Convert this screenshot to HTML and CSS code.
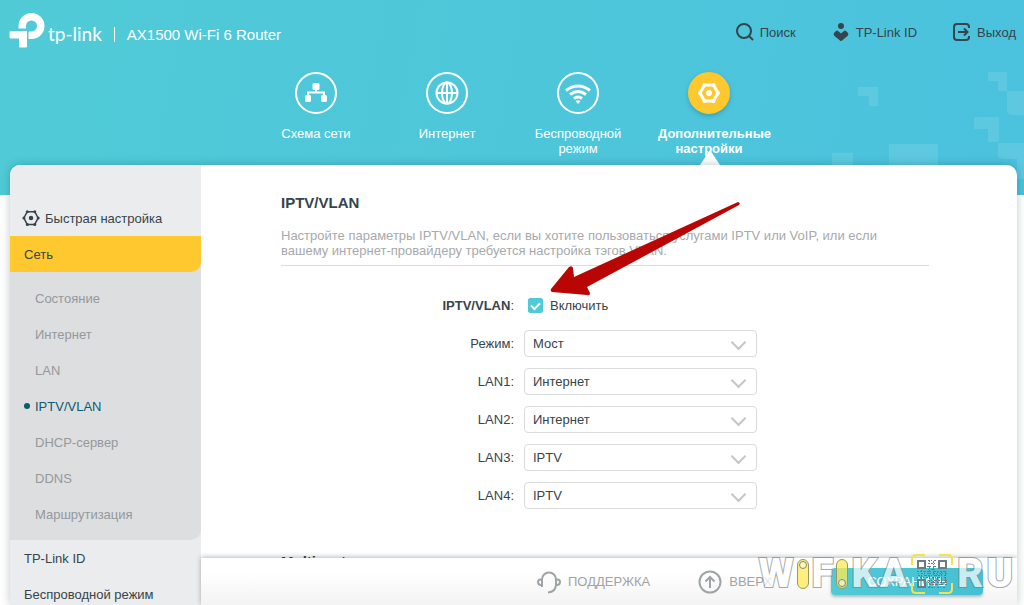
FILE: index.html
```html
<!DOCTYPE html>
<html lang="ru">
<head>
  <meta charset="UTF-8">
  <meta name="viewport" content="width=device-width, initial-scale=1.0">
  <title>AX1500 Wi-Fi 6 Router</title>
  <link rel="stylesheet" href="styles.css">
</head>
<body>
  <svg class="pixels" viewBox="0 0 192 130" aria-hidden="true">
    <path d="M26 22h20v19h-9V31H26z M156 7h19v19h-9V16h-10z M175 26h17v24h-12q-5 0-5-5z M142 52h25v25h-11V64h-14z M166 78h26v36h-7V94h-14q-5 0-5-5z M57 79h49v21H57z M0 88h21v12H0z"/>
  </svg>

  <header class="topbar">
    <a class="logo" href="#">
      <svg viewBox="0 0 36 36" width="36" height="36" aria-hidden="true">
        <path d="M8.500 15.500V13a13 13 0 1 1 13 13h-3v-6.500a1 1 0 0 1 1-1h2a5.500 5.500 0 1 0-5.500-5.500v2.500z M1 18h16v15.500a1 1 0 0 1-1 1H10a1 1 0 0 1-1-1V25.500H1a1.500 1.500 0 0 1-1.500-1.500v-4.500A1.500 1.500 0 0 1 1 18z"/>
      </svg>
      <span class="logo-text">tp-link</span>
    </a>
    <span class="model">AX1500 Wi-Fi 6 Router</span>
    <nav class="tools">
      <a href="#">
        <svg viewBox="0 0 20 20" width="20" height="20"><circle cx="9" cy="9" r="7"/><path d="M14 14l4 4"/></svg>
        Поиск
      </a>
      <a href="#">
        <svg class="solid" viewBox="0 0 20 20" width="20" height="20"><circle cx="10" cy="4" r="3"/><path d="M3 11l2-2q1-1 2 0l3 2.500L13 9q1-1 2 0l2 2q1 1.500-.5 3L11 18.500q-1 1-2 0L3.500 14Q2 12.500 3 11z"/></svg>
        TP-Link ID
      </a>
      <a href="#">
        <svg viewBox="0 0 20 20" width="20" height="20"><path d="M17 6V5q0-3-3-3H5Q2 2 2 5v10q0 3 3 3h9q3 0 3-3v-1M6 10h9M12 6.500l3.500 3.500-3.500 3.500"/></svg>
        Выход
      </a>
    </nav>
  </header>

  <nav class="tabs">
    <a href="#" class="tab">
      <span class="tab-icon">
        <svg viewBox="0 0 24 24" width="24" height="24"><path class="fill" d="M10 2h4q1.500 0 1.500 1.500v4Q15.500 9 14 9h-4Q8.500 9 8.500 7.500v-4Q8.500 2 10 2zM2.500 14h3Q7 14 7 15.500v4Q7 21 5.500 21h-3Q1 21 1 19.500v-4Q1 14 2.500 14zM18.500 14h3q1.500 0 1.500 1.500v4q0 1.500-1.500 1.500h-3q-1.500 0-1.500-1.500v-4q0-1.500 1.500-1.500z"/><path d="M12 8v4M4 15v-3.500h16V15"/></svg>
      </span>
      <span class="tab-label">Схема сети</span>
    </a>
    <a href="#" class="tab">
      <span class="tab-icon">
        <svg viewBox="0 0 24 24" width="24" height="24"><circle cx="12" cy="12" r="10.500"/><ellipse cx="12" cy="12" rx="5" ry="10.500"/><path d="M12 1.500v21M2 12h20"/></svg>
      </span>
      <span class="tab-label">Интернет</span>
    </a>
    <a href="#" class="tab">
      <span class="tab-icon">
        <svg class="wifi" viewBox="0 0 26 26" width="26" height="26"><path d="M1 10.500q12-9 24 0M5 14.500q8-6 16 0M9 18.500q4-3 8 0"/><path class="fill" d="M10.500 21q2.500-1.500 5 0L13 24z"/></svg>
      </span>
      <span class="tab-label">Беспроводной режим</span>
    </a>
    <a href="#" class="tab active">
      <span class="tab-icon">
        <svg class="gear" viewBox="0 0 24 24" width="24" height="24"><path d="M7.500 4h9L21 12l-4.500 8h-9L3 12z"/><circle class="fill" cx="12" cy="12" r="3"/><path class="knobs" d="M7.500 4h.1M16.500 4h.1M3 12h.1M21 12h.1M7.500 20h.1M16.500 20h.1"/></svg>
      </span>
      <span class="tab-label">Дополнительные настройки</span>
    </a>
  </nav>

  <div class="card">
    <nav class="sidebar">
      <a href="#" class="item quick">
        <svg class="gear" viewBox="0 0 24 24" width="18" height="18"><path d="M7 3.500h10L21.500 12 17 20.500H7L2.500 12z"/><circle class="fill" cx="12" cy="12" r="3"/><path class="knobs" d="M7 3.500h.1M17 3.500h.1M2.500 12h.1M21.500 12h.1M7 20.500h.1M17 20.500h.1"/></svg>
        Быстрая настройка
      </a>
      <div class="group">
        <a href="#" class="item current">Сеть</a>
        <ul class="submenu">
          <li><a href="#">Состояние</a></li>
          <li><a href="#">Интернет</a></li>
          <li><a href="#">LAN</a></li>
          <li><a href="#" class="selected">IPTV/VLAN</a></li>
          <li><a href="#">DHCP-сервер</a></li>
          <li><a href="#">DDNS</a></li>
          <li><a href="#">Маршрутизация</a></li>
        </ul>
      </div>
      <a href="#" class="item">TP-Link ID</a>
      <a href="#" class="item">Беспроводной режим</a>
    </nav>

    <div class="main">
      <main class="content">
        <h1>IPTV/VLAN</h1>
        <p class="intro">Настройте параметры IPTV/VLAN, если вы хотите пользоваться услугами IPTV или VoIP, или если вашему интернет-провайдеру требуется настройка тэгов VLAN.</p>

        <form id="iptv" class="settings">
          <label class="name" for="enable"><b>IPTV/VLAN</b>:</label>
          <div class="check">
            <input type="checkbox" id="enable" checked>
            <label for="enable">Включить</label>
          </div>

          <label class="name" for="mode">Режим:</label>
          <div class="select">
            <select id="mode"><option>Мост</option></select>
          </div>

          <label class="name" for="lan1">LAN1:</label>
          <div class="select">
            <select id="lan1"><option>Интернет</option><option>IPTV</option></select>
          </div>

          <label class="name" for="lan2">LAN2:</label>
          <div class="select">
            <select id="lan2"><option>Интернет</option><option>IPTV</option></select>
          </div>

          <label class="name" for="lan3">LAN3:</label>
          <div class="select">
            <select id="lan3"><option>IPTV</option><option>Интернет</option></select>
          </div>

          <label class="name" for="lan4">LAN4:</label>
          <div class="select">
            <select id="lan4"><option>IPTV</option><option>Интернет</option></select>
          </div>
        </form>

        <h2>Multicast</h2>
      </main>

      <footer class="footer">
        <a href="#">
          <svg viewBox="0 0 24 24" width="24" height="24"><path d="M5 17V9.500a7 7 0 0 1 14 0V14q0 8-8 8.500M5 9.500H3.500Q1 9.500 1 12t2.500 3H5M19 9.500h1.500q2.500 0 2.500 2.500t-2.500 3H19"/></svg>
          ПОДДЕРЖКА
        </a>
        <a href="#">
          <svg viewBox="0 0 24 24" width="24" height="24"><circle cx="12" cy="12" r="10.500"/><path d="M12 18V7M7.500 11.500L12 7l4.500 4.500"/></svg>
          ВВЕРХ
        </a>
        <button type="submit" form="iptv">СОХРАНИТЬ</button>
      </footer>
    </div>
  </div>

  <svg class="arrow" viewBox="0 0 192 96" aria-hidden="true">
    <path d="M189 1q3 1 1 3L38 86l3 6q0 3-3 2L3 91q-2-1-1-3L20 66q3-2 4 1l1 9z"/>
  </svg>

  <div class="watermark" aria-hidden="true">
    <span>W</span>
    <svg viewBox="0 0 12 30" width="12" height="30"><rect class="pill" x=".5" y=".5" width="11" height="29" rx="5.500"/><circle class="knob" cx="6" cy="6" r="3.500"/></svg>
    <span>F</span>
    <svg viewBox="0 0 12 30" width="12" height="30"><rect class="pill" x=".5" y=".5" width="11" height="29" rx="5.500"/><circle class="knob" cx="6" cy="24" r="3.500"/></svg>
    <span>K</span>
    <span>A</span>
    <svg class="qr" viewBox="0 0 44 42" width="44" height="42">
      <path class="frame" d="M2 12V6q0-4 4-4h9M29 2h9q4 0 4 4v6M2 30v6q0 4 4 4h9M29 40h9q4 0 4-4v-6"/>
      <path class="finder" d="M8 8h7v7H8zM29 8h7v7h-7zM8 27h7v7H8z"/>
      <path class="dots a" d="M18 7.500h8M17 13.500h9M7 18.500h30M8 22.500h28M18 27.500h19M19 31.500h18"/>
      <path class="dots b" d="M18 10.500h8M18 16.500h8M8 20.500h29M7 24.500h30M18 29.500h19M18 34.500h18"/>
      <path class="dots a" d="M19.500 7v28M23.500 8v26M27.500 18v16M31.500 18v16M35.500 18v16M11.500 17v9"/>
    </svg>
    <span>R</span>
    <span>U</span>
  </div>
</body>
</html>
```
FILE: styles.css
```css
* { box-sizing: border-box; }
body {
  margin: 0;
  height: 100vh;
  overflow: hidden;
  display: flex;
  flex-direction: column;
  position: relative;
  font-family: "Liberation Sans", Arial, sans-serif;
  font-size: 13px;
  line-height: 15px;
  color: #36444b;
  background: linear-gradient(100deg, #50cbd6, #4bc2de) top / 100% 195px no-repeat #fff;
}
a { color: inherit; text-decoration: none; }
svg { flex: none; fill: none; stroke: currentColor; stroke-width: 2; }
.fill { fill: currentColor; stroke: none; }
.knobs { stroke-width: 4; stroke-linecap: round; }

.pixels {
  position: absolute;
  right: 0;
  top: 65px;
  width: 192px;
  height: 130px;
  fill: #fff;
  fill-opacity: 0.1;
  stroke: none;
}

/* header */
.topbar {
  display: flex;
  align-items: center;
  height: 64px;
  padding: 4px 8px 0 10px;
  position: relative;
}
.logo { display: flex; align-items: center; gap: 2px; color: #fff; }
.logo svg { fill: #fff; stroke: none; margin-bottom: 6px; overflow: visible; }
.logo-text { font-family: Lato, sans-serif; font-size: 19px; line-height: 24px; }
.model {
  margin-left: 12px;
  padding-left: 12px;
  border-left: 1px solid #fff;
  color: #fff;
  font-size: 15px;
  line-height: 15px;
}
.tools { display: flex; gap: 35px; margin: 0 0 4px auto; }
.tools a { display: flex; align-items: center; gap: 5px; }
.tools .solid { fill: currentColor; stroke: none; }

.tabs { display: flex; justify-content: center; padding: 8px 0 0 1px; height: 101px; position: relative; }
.tab {
  width: 131px;
  display: flex;
  flex-direction: column;
  align-items: center;
  gap: 12px;
  text-align: center;
  color: #fff;
  position: relative;
}
.tab-label { width: 102px; }
.tab-icon {
  display: flex;
  flex: none;
  align-items: center;
  justify-content: center;
  width: 42px;
  height: 42px;
  border: 2px solid #fff;
  border-radius: 50%;
}
.tab .wifi { stroke-width: 3; }
.tab .gear { stroke-width: 3; }
.tab.active { font-weight: bold; }
.active .tab-icon { background: #ffc82e; border-color: #ffc82e; box-shadow: 0 2px 4px rgba(0, 60, 80, 0.25); }
.tab.active::after {
  content: "";
  position: absolute;
  bottom: 0;
  left: 50%;
  margin-left: -9px;
  border: 10px solid transparent;
  border-top: 0;
  border-bottom: 15px solid #fff;
}

/* card */
.card {
  flex: 1;
  min-height: 0;
  display: flex;
  margin: 0 7px 0 10px;
  border-radius: 10px 10px 0 0;
  overflow: hidden;
  position: relative;
  background: #fff;
  box-shadow: 0 0 10px rgba(0, 40, 50, 0.25);
}
.sidebar { width: 191px; flex: none; padding-top: 35px; background: #ebeced; overflow: hidden; }
.item { display: flex; align-items: center; height: 36px; padding-left: 14px; }
.quick { gap: 5px; padding-left: 12px; }
.group { background: #dddee0; border-radius: 0 0 10px 0; }
.current { background: #ffc82e; border-radius: 0 0 10px 0; }
.submenu { list-style: none; margin: 0; padding: 8px 0; }
.submenu a { display: flex; align-items: center; height: 36px; padding-left: 25px; color: #94999c; }
.submenu .selected { color: #0c5c6b; padding-left: 14px; }
.selected::before { content: ""; width: 6px; height: 6px; margin-right: 5px; border-radius: 50%; background: currentColor; }

.main { flex: 1; min-width: 0; display: flex; flex-direction: column; }
.content { flex: 1; min-height: 0; overflow: hidden; padding: 29px 88px 0 80px; }
h1, h2 { margin: 0; font-size: 15px; line-height: 17px; font-weight: bold; }
.intro { margin: 17px 0 0; padding: 0 24px 7px 0; border-bottom: 1px solid #dcdcdc; color: #a7aaac; }

.settings { display: grid; grid-template-columns: 233px 233px; gap: 11px 10px; margin-top: 26px; align-items: center; }
.name { text-align: right; }
.check { display: flex; align-items: center; gap: 7px; height: 27px; padding-left: 4px; }
.check input {
  appearance: none;
  margin: 0;
  width: 15px;
  height: 15px;
  border-radius: 2px;
  border: 1px solid #50cbd6;
  display: grid;
  place-items: center;
}
.check input:checked { background: #50cbd6; }
.check input:checked::before {
  content: "";
  width: 7px;
  height: 4px;
  margin-bottom: 2px;
  border: solid #fff;
  border-width: 0 0 2px 2px;
  transform: rotate(-45deg);
}
.select { position: relative; }
.select select {
  appearance: none;
  display: block;
  width: 100%;
  height: 27px;
  padding: 0 30px 0 8px;
  font: inherit;
  color: inherit;
  background: #fff;
  border: 1px solid #d9dbdc;
  border-radius: 4px;
}
.select::after {
  content: "";
  position: absolute;
  right: 13px;
  top: 7px;
  width: 9px;
  height: 9px;
  border: solid #c3c7c9;
  border-width: 0 2px 2px 0;
  transform: rotate(45deg);
  pointer-events: none;
}
h2 { margin-top: 44px; }

.footer {
  flex: none;
  display: flex;
  align-items: center;
  justify-content: flex-end;
  height: 47px;
  padding-right: 34px;
  position: relative;
  color: #a0a4a6;
  background: linear-gradient(#fff 30%, #f3f3f3);
  box-shadow: 0 -1px 5px rgba(0, 30, 40, 0.3);
}
.footer a { display: flex; align-items: center; gap: 7px; margin-right: 48px; }
.footer a + a { margin-right: 59px; }
.footer button {
  width: 152px;
  height: 27px;
  border: 0;
  border-radius: 4px;
  font: inherit;
  color: #fff;
  background: linear-gradient(100deg, #50cbd6, #45bfd3);
  box-shadow: 0 2px 3px rgba(0, 60, 80, 0.3);
}

.arrow {
  position: absolute;
  left: 549px;
  top: 201px;
  width: 192px;
  height: 96px;
  fill: #b90504;
  stroke: none;
}

/* watermark */
.watermark {
  position: absolute;
  right: 11px;
  bottom: 10px;
  display: flex;
  align-items: center;
  gap: 3px;
  height: 42px;
  font: 900 40px/42px Roboto, sans-serif;
  color: #fff;
}
.watermark span { -webkit-text-stroke: 2px #7d8587; paint-order: stroke fill; opacity: 0.7; }
.watermark svg { stroke-width: 1; }
.pill { fill: #ffea50; fill-opacity: 0.75; stroke: #9a9860; }
.knob { fill: #fff; fill-opacity: 0.5; stroke: #7d8a80; }
.watermark .frame { stroke: #f5e34b; stroke-width: 2; }
.watermark .finder { stroke: #6c7c80; stroke-width: 2; }
.watermark .dots { stroke: #6c7c80; stroke-width: 1; }
.watermark .a { stroke-dasharray: 2 1 1 2 3 1; }
.watermark .b { stroke-dasharray: 1 2 2 1; }
```
